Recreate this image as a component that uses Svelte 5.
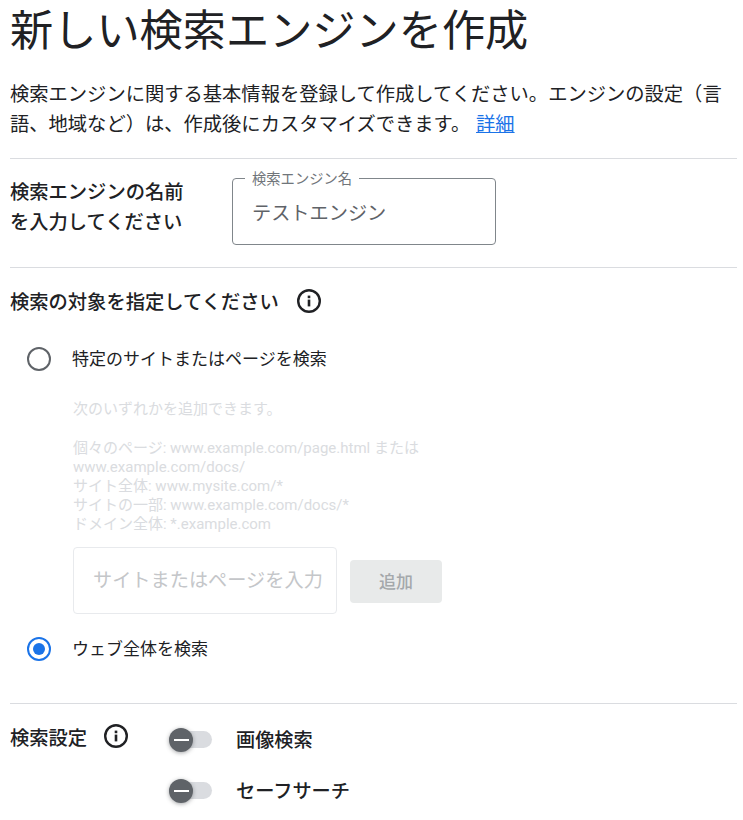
<script>
  const hints = ['個々のページ: www.example.com/page.html または', 'www.example.com/docs/', 'サイト全体: www.mysite.com/*', 'サイトの一部: www.example.com/docs/*', 'ドメイン全体: *.example.com'];
</script>

{#snippet info()}
  <svg class="info" viewBox="0 0 24 24" width="24" height="24" aria-hidden="true">
    <circle cx="12" cy="12" r="10.8" fill="none" stroke="#202124" stroke-width="2.4"/>
    <rect x="10.7" y="10.6" width="2.6" height="6.8" fill="#202124"/>
    <rect x="10.7" y="6.6" width="2.6" height="2.6" fill="#202124"/>
  </svg>
{/snippet}

{#snippet toggle(label)}
  <div class="toggle-row">
    <span class="track"><span class="thumb"><span class="dash"></span></span></span>
    <span class="toggle-label">{label}</span>
  </div>
{/snippet}

<main class="page">
  <h1>新しい検索エンジンを作成</h1>
  <p class="intro">検索エンジンに関する基本情報を登録して作成してください。エンジンの設定（言語、地域など）は、作成後にカスタマイズできます。 <a href="#top">詳細</a></p>

  <section class="name-row">
    <div class="name-label">検索エンジンの名前<br>を入力してください</div>
    <div class="outlined">
      <span class="legend">検索エンジン名</span>
      <span class="value">テストエンジン</span>
    </div>
  </section>

  <section class="target">
    <div class="target-head">
      <span>検索の対象を指定してください</span>
      {@render info()}
    </div>
    <div class="radio-row first">
      <span class="radio"></span>
      <span>特定のサイトまたはページを検索</span>
    </div>
    <div class="disabled-block">
      <p class="hint-lead">次のいずれかを追加できます。</p>
      <div class="hints">
        {#each hints as h}<div>{h}</div>{/each}
      </div>
      <div class="add-row">
        <div class="site-input">サイトまたはページを入力</div>
        <div class="add">追加</div>
      </div>
    </div>
    <div class="radio-row second">
      <span class="radio on"><span class="dot"></span></span>
      <span>ウェブ全体を検索</span>
    </div>
  </section>

  <section class="settings">
    <div class="settings-head">
      <span>検索設定</span>
      <span class="info-lift">{@render info()}</span>
    </div>
    <div class="toggles">
      {@render toggle('画像検索')}
      {@render toggle('セーフサーチ')}
    </div>
  </section>
</main>

<style>
  :global(body) {
    margin: 0;
    background: #fff;
    overflow: hidden;
  }
  .page {
    box-sizing: border-box;
    width: 743px;
    height: 820px;
    overflow: hidden;
    padding: 0 6px 0 10px;
    font-family: Roboto, "Noto Sans CJK JP", sans-serif;
    color: #202124;
    text-spacing-trim: space-all;
  }
  h1 {
    margin: 0;
    padding-top: 6px;
    font-size: 43.2px;
    line-height: 52px;
    font-weight: 400;
  }
  .intro {
    margin: 22px 0 0;
    font-size: 19.3px;
    line-height: 30px;
    padding-bottom: 18px;
    border-bottom: 1px solid #dadce0;
  }
  a {
    color: #1a73e8;
    text-decoration: underline;
    margin-left: 1px;
  }
  .name-row {
    display: flex;
    height: 109px;
    box-sizing: border-box;
    border-bottom: 1px solid #dadce0;
    padding-top: 19px;
  }
  .name-label {
    width: 222px;
    font-size: 19.3px;
    line-height: 30px;
    font-weight: 500;
  }
  .outlined {
    position: relative;
    box-sizing: border-box;
    width: 264px;
    height: 67px;
    border: 1px solid #80868b;
    border-radius: 4px;
    padding: 21px 19px 0;
    font-size: 19.2px;
    line-height: 28px;
    color: #5f6368;
  }
  .legend {
    position: absolute;
    left: 12px;
    top: -9px;
    padding: 0 7px;
    background: #fff;
    font-size: 14.3px;
    line-height: 18px;
    color: #70757a;
  }
  .target {
    padding-top: 18px;
    height: 436px;
    box-sizing: border-box;
    border-bottom: 1px solid #dadce0;
  }
  .target-head {
    display: flex;
    align-items: center;
    gap: 18px;
    height: 30px;
    font-size: 19.3px;
    font-weight: 500;
  }
  .info { flex: none; display: block; }
  .info-lift { display: block; margin-top: -2px; }
  .radio-row {
    display: flex;
    align-items: center;
    gap: 21px;
    margin-left: 17px;
    height: 24px;
    font-size: 17px;
    line-height: 24px;
  }
  .first { margin-top: 31px; }
  .second { margin-top: 23px; }
  .radio {
    box-sizing: border-box;
    flex: none;
    width: 24px;
    height: 24px;
    border: 2px solid #5f6368;
    border-radius: 50%;
    display: flex;
    align-items: center;
    justify-content: center;
  }
  .radio.on { border-color: #1a73e8; }
  .dot {
    width: 12px;
    height: 12px;
    border-radius: 50%;
    background: #1a73e8;
  }
  .disabled-block {
    margin: 29px 0 0 63px;
    font-size: 15px;
    line-height: 19px;
    color: #dadce0;
  }
  .hint-lead { margin: 0 0 20px; }
  .add-row {
    display: flex;
    align-items: center;
    gap: 13px;
    margin-top: 13px;
  }
  .site-input {
    box-sizing: border-box;
    width: 264px;
    height: 67px;
    border: 1px solid #e8eaed;
    border-radius: 4px;
    padding: 20px 0 0 19px;
    font-size: 19.2px;
    line-height: 26px;
    color: #c4c6c9;
    white-space: nowrap;
    overflow: hidden;
  }
  .add {
    width: 92px;
    height: 43px;
    margin-top: 2px;
    border-radius: 4px;
    background: #e8eaea;
    color: #a4a8ab;
    font-size: 17px;
    font-weight: 500;
    line-height: 44px;
    text-align: center;
  }
  .settings {
    display: flex;
    padding-top: 18px;
  }
  .settings-head {
    display: flex;
    align-items: center;
    gap: 17px;
    width: 159px;
    height: 30px;
    font-size: 19.3px;
    font-weight: 500;
  }
  .toggles {
    display: flex;
    flex-direction: column;
    gap: 21px;
    padding-top: 2px;
  }
  .toggle-row {
    display: flex;
    align-items: center;
    gap: 24px;
    height: 30px;
    font-size: 19.2px;
    font-weight: 500;
  }
  .track {
    position: relative;
    display: block;
    width: 43px;
    height: 17px;
    border-radius: 9px;
    background: #dadce0;
  }
  .thumb {
    position: absolute;
    left: 0;
    top: -3px;
    width: 24px;
    height: 24px;
    border-radius: 50%;
    background: #5f6368;
    box-shadow: 0 1px 4px rgba(60, 64, 67, 0.45);
    display: flex;
    align-items: center;
    justify-content: center;
  }
  .dash {
    width: 15px;
    height: 2px;
    background: #fff;
  }
</style>
